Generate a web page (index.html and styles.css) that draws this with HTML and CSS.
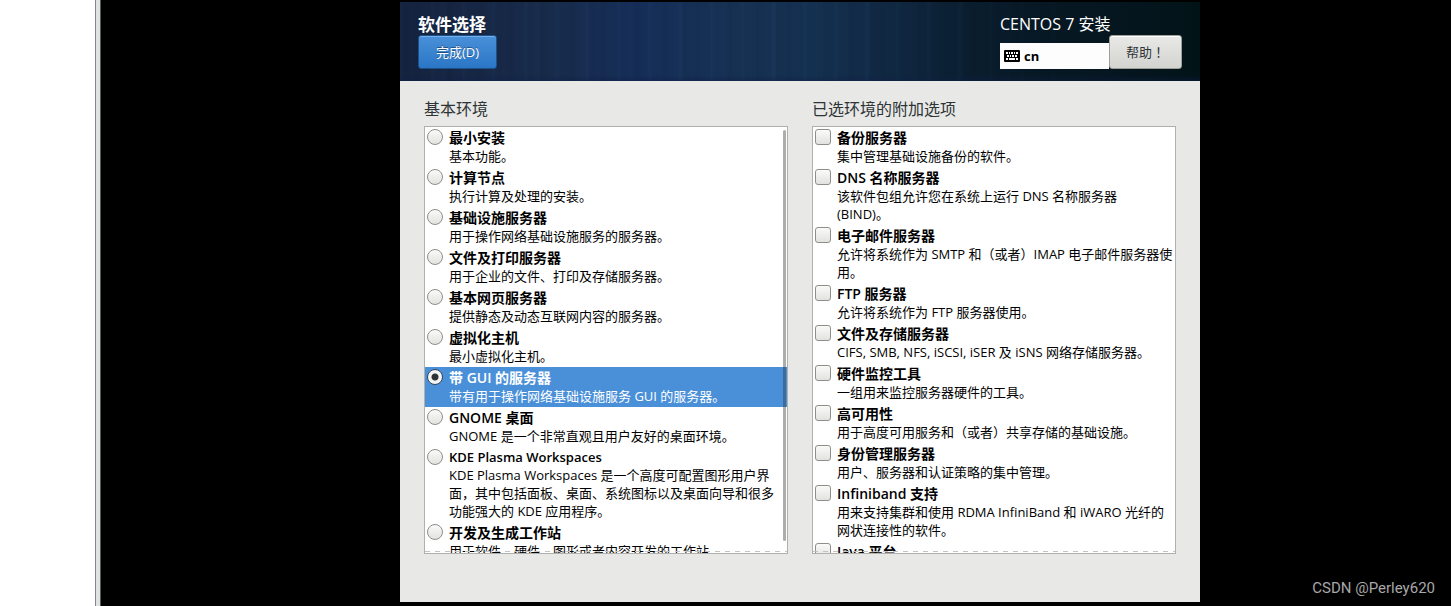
FILE: index.html
```html
<!DOCTYPE html>
<html lang="zh-CN">
<head>
<meta charset="utf-8">
<title>软件选择</title>
<link rel="stylesheet" href="styles.css">
</head>
<body>
<aside class="side"></aside>
<main class="desktop">
  <div class="installer">
    <header class="header">
      <div class="header-left">
        <h1 class="title">软件选择</h1>
        <button class="btn btn-primary" type="button">完成(D)</button>
      </div>
      <div class="header-right">
        <div class="product">CENTOS 7 安装</div>
        <div class="tools">
          <button class="layout" type="button">
            <svg class="keyboard" viewBox="0 0 16 12" width="16" height="12" aria-hidden="true">
              <rect width="16" height="12" rx="1" fill="#000"/>
              <path fill="#fff" d="M2 2h2v2H2zM5 2h1v2H5zM7 2h2v2H7zM10 2h1v2h-1zM12 2h2v2h-2zM3 5h2v2H3zM6 5h1v2H6zM8 5h2v2H8zM11 5h2v2h-2zM2 8h2v2H2zM5 8h6v2H5zM12 8h2v2h-2z"/>
            </svg>
            cn
          </button>
          <button class="btn btn-help" type="button" lang="zh-TW">帮助！</button>
        </div>
      </div>
    </header>
    <div class="content">
      <section class="panel">
        <h2 class="heading">基本环境</h2>
        <div class="list list-scroll">
          <label class="row"><input class="radio" type="radio" name="env"><span class="text"><b class="name">最小安装</b><span class="desc">基本功能。</span></span></label>
          <label class="row"><input class="radio" type="radio" name="env"><span class="text"><b class="name">计算节点</b><span class="desc">执行计算及处理的安装。</span></span></label>
          <label class="row"><input class="radio" type="radio" name="env"><span class="text"><b class="name">基础设施服务器</b><span class="desc">用于操作网络基础设施服务的服务器。</span></span></label>
          <label class="row"><input class="radio" type="radio" name="env"><span class="text"><b class="name">文件及打印服务器</b><span class="desc">用于企业的文件、打印及存储服务器。</span></span></label>
          <label class="row"><input class="radio" type="radio" name="env"><span class="text"><b class="name">基本网页服务器</b><span class="desc">提供静态及动态互联网内容的服务器。</span></span></label>
          <label class="row"><input class="radio" type="radio" name="env"><span class="text"><b class="name">虚拟化主机</b><span class="desc">最小虚拟化主机。</span></span></label>
          <label class="row selected"><input class="radio" type="radio" name="env" checked><span class="text"><b class="name">带 GUI 的服务器</b><span class="desc">带有用于操作网络基础设施服务 GUI 的服务器。</span></span></label>
          <label class="row"><input class="radio" type="radio" name="env"><span class="text"><b class="name">GNOME 桌面</b><span class="desc">GNOME 是一个非常直观且用户友好的桌面环境。</span></span></label>
          <label class="row"><input class="radio" type="radio" name="env"><span class="text"><b class="name latin">KDE Plasma Workspaces</b><span class="desc">KDE Plasma Workspaces 是一个高度可配置图形用户界面，其中包括面板、桌面、系统图标以及桌面向导和很多功能强大的 KDE 应用程序。</span></span></label>
          <label class="row"><input class="radio" type="radio" name="env"><span class="text"><b class="name">开发及生成工作站</b><span class="desc">用于软件、硬件、图形或者内容开发的工作站。</span></span></label>
          <span class="scrollbar"></span>
        </div>
      </section>
      <section class="panel">
        <h2 class="heading">已选环境的附加选项</h2>
        <div class="list">
          <label class="row"><input class="check" type="checkbox"><span class="text"><b class="name">备份服务器</b><span class="desc">集中管理基础设施备份的软件。</span></span></label>
          <label class="row"><input class="check" type="checkbox"><span class="text"><b class="name">DNS 名称服务器</b><span class="desc">该软件包组允许您在系统上运行 DNS 名称服务器<br>(BIND)。</span></span></label>
          <label class="row"><input class="check" type="checkbox"><span class="text"><b class="name">电子邮件服务器</b><span class="desc">允许将系统作为 SMTP 和（或者）IMAP 电子邮件服务器使<wbr>用。</span></span></label>
          <label class="row"><input class="check" type="checkbox"><span class="text"><b class="name">FTP 服务器</b><span class="desc">允许将系统作为 FTP 服务器使用。</span></span></label>
          <label class="row"><input class="check" type="checkbox"><span class="text"><b class="name">文件及存储服务器</b><span class="desc">CIFS, SMB, NFS, iSCSI, iSER 及 iSNS 网络存储服务器。</span></span></label>
          <label class="row"><input class="check" type="checkbox"><span class="text"><b class="name">硬件监控工具</b><span class="desc">一组用来监控服务器硬件的工具。</span></span></label>
          <label class="row"><input class="check" type="checkbox"><span class="text"><b class="name">高可用性</b><span class="desc">用于高度可用服务和（或者）共享存储的基础设施。</span></span></label>
          <label class="row"><input class="check" type="checkbox"><span class="text"><b class="name">身份管理服务器</b><span class="desc">用户、服务器和认证策略的集中管理。</span></span></label>
          <label class="row"><input class="check" type="checkbox"><span class="text"><b class="name">Infiniband 支持</b><span class="desc">用来支持集群和使用 RDMA InfiniBand 和 iWARO 光纤的网状连接性的软件。</span></span></label>
          <label class="row"><input class="check" type="checkbox"><span class="text"><b class="name">Java 平台</b></span></label>
        </div>
      </section>
    </div>
  </div>
  <span class="watermark">CSDN @Perley620</span>
</main>
</body>
</html>
```
FILE: styles.css
```css
* {
  box-sizing: border-box;
}

body {
  margin: 0;
  height: 100vh;
  display: flex;
  background: #000;
  color: #000;
  font-family: "Open Sans", "Noto Sans CJK SC", sans-serif;
  font-size: 13px;
  line-height: 18px;
}

button {
  font: inherit;
}

.side {
  flex: 0 0 101px;
  background: linear-gradient(to right, #fff 95px, #85838f 95px, #85838f 96px, #e0e3e2 96px, #e0e3e2 100px, #55585a 100px);
}

.desktop {
  position: relative;
  flex: 1;
  min-width: 0;
  display: grid;
  grid-template-columns: 299fr 800fr 251fr;
  padding: 2px 0 4px;
}

.installer {
  grid-column: 2;
  min-width: 0;
  min-height: 0;
  display: flex;
  flex-direction: column;
  background: #e8e8e6;
}

.header {
  display: flex;
  justify-content: space-between;
  align-items: flex-end;
  padding: 12px 18px;
  color: #fff;
  background:
    linear-gradient(to bottom, transparent 92%, rgba(15, 30, 70, .4)),
    linear-gradient(to right, transparent 65%, #061722 86%, #021318 100%),
    repeating-linear-gradient(to right, rgba(80, 140, 200, .03) 0 2px, transparent 5px 13px, rgba(0, 0, 20, .04) 16px 18px, transparent 23px 31px),
    repeating-linear-gradient(to right, rgba(0, 0, 20, .03) 0 3px, transparent 12px 37px, rgba(70, 120, 190, .02) 43px 47px),
    linear-gradient(to right, #14233f 0%, #182b4a 18%, #152e58 30%, #163152 42%, #143050 52%, #0e243b 65%, #0a1e30 76%, #061722 86%, #021318 100%);
}

.header-left {
  display: flex;
  flex-direction: column;
  align-items: flex-start;
}

.title {
  margin: 0;
  font-size: 17px;
  line-height: 21px;
  font-weight: 700;
}

.btn {
  height: 34px;
  padding: 0 16px;
  border-radius: 3px;
}

.btn-primary {
  padding: 0 17px;
  border: 1px solid #1c5187;
  background: linear-gradient(#4a90d9, #2a76c6);
  box-shadow: inset 0 1px #76b0ec;
  color: #fff;
  text-shadow: 0 -1px rgba(0, 0, 0, .4);
}

.btn-help {
  border: 1px solid #a0a09a;
  background: linear-gradient(#e9e9e7, #d3d3d0);
  box-shadow: inset 0 1px #fff;
  color: #2e3436;
  font-family: "Open Sans", "Noto Sans CJK TC", sans-serif;
}

.header-right {
  width: 182px;
}

.product {
  font-size: 16px;
  line-height: 21px;
}

.tools {
  display: flex;
  align-items: flex-end;
}

.layout {
  flex: 1;
  height: 26px;
  display: flex;
  align-items: center;
  gap: 4px;
  padding: 0 4px;
  border: 0;
  background: #fdfdfd;
  color: #000;
  font-weight: 700;
}

.content {
  flex: 1;
  min-height: 0;
  display: grid;
  grid-template-columns: 1fr 1fr;
  gap: 24px;
  padding: 17px 24px 48px;
}

.panel {
  min-width: 0;
  min-height: 0;
  display: flex;
  flex-direction: column;
}

.heading {
  margin: 0 0 6px;
  font-size: 16px;
  line-height: 22px;
  font-weight: 400;
  color: #2e3436;
}

.list {
  position: relative;
  flex: 1;
  min-height: 0;
  overflow: hidden;
  border: 1px solid #b0b0ac;
  background: #fff;
}

.list::after {
  content: "";
  position: absolute;
  left: 0;
  right: 0;
  bottom: 1px;
  height: 1px;
  background: repeating-linear-gradient(to right, #c4c4c4 0 5px, transparent 5px 10px);
}

.row {
  display: flex;
  gap: 6px;
  padding: 2px 0 2px 2px;
}

.list-scroll .row {
  padding-right: 6px;
}

.selected {
  background: #4a90d9;
  color: #fff;
}

.text {
  flex: 1;
  min-width: 0;
}

.name,
.desc {
  display: block;
}

.name {
  font-size: 14px;
  font-weight: 600;
}

.latin {
  font-size: 13px;
  line-height: 17px;
}

.radio,
.check {
  appearance: none;
  flex: none;
  width: 16px;
  height: 16px;
  margin: 0;
  border: 1px solid #8f8f8a;
  background: linear-gradient(#fafafa, #e2e2e0);
}

.radio {
  border-radius: 50%;
}

.check {
  border-radius: 3px;
}

.radio:checked {
  border-color: #33475c;
  background: radial-gradient(circle, #2e3436 3px, #f4f4f4 4px);
}

.scrollbar {
  position: absolute;
  top: 3px;
  right: 1px;
  bottom: 12px;
  width: 3px;
  border-radius: 2px;
  background: rgba(46, 52, 54, .4);
}

.watermark {
  position: absolute;
  right: 16px;
  bottom: 9px;
  font-family: Roboto, sans-serif;
  font-size: 15px;
  color: #a8a8a8;
}
```
